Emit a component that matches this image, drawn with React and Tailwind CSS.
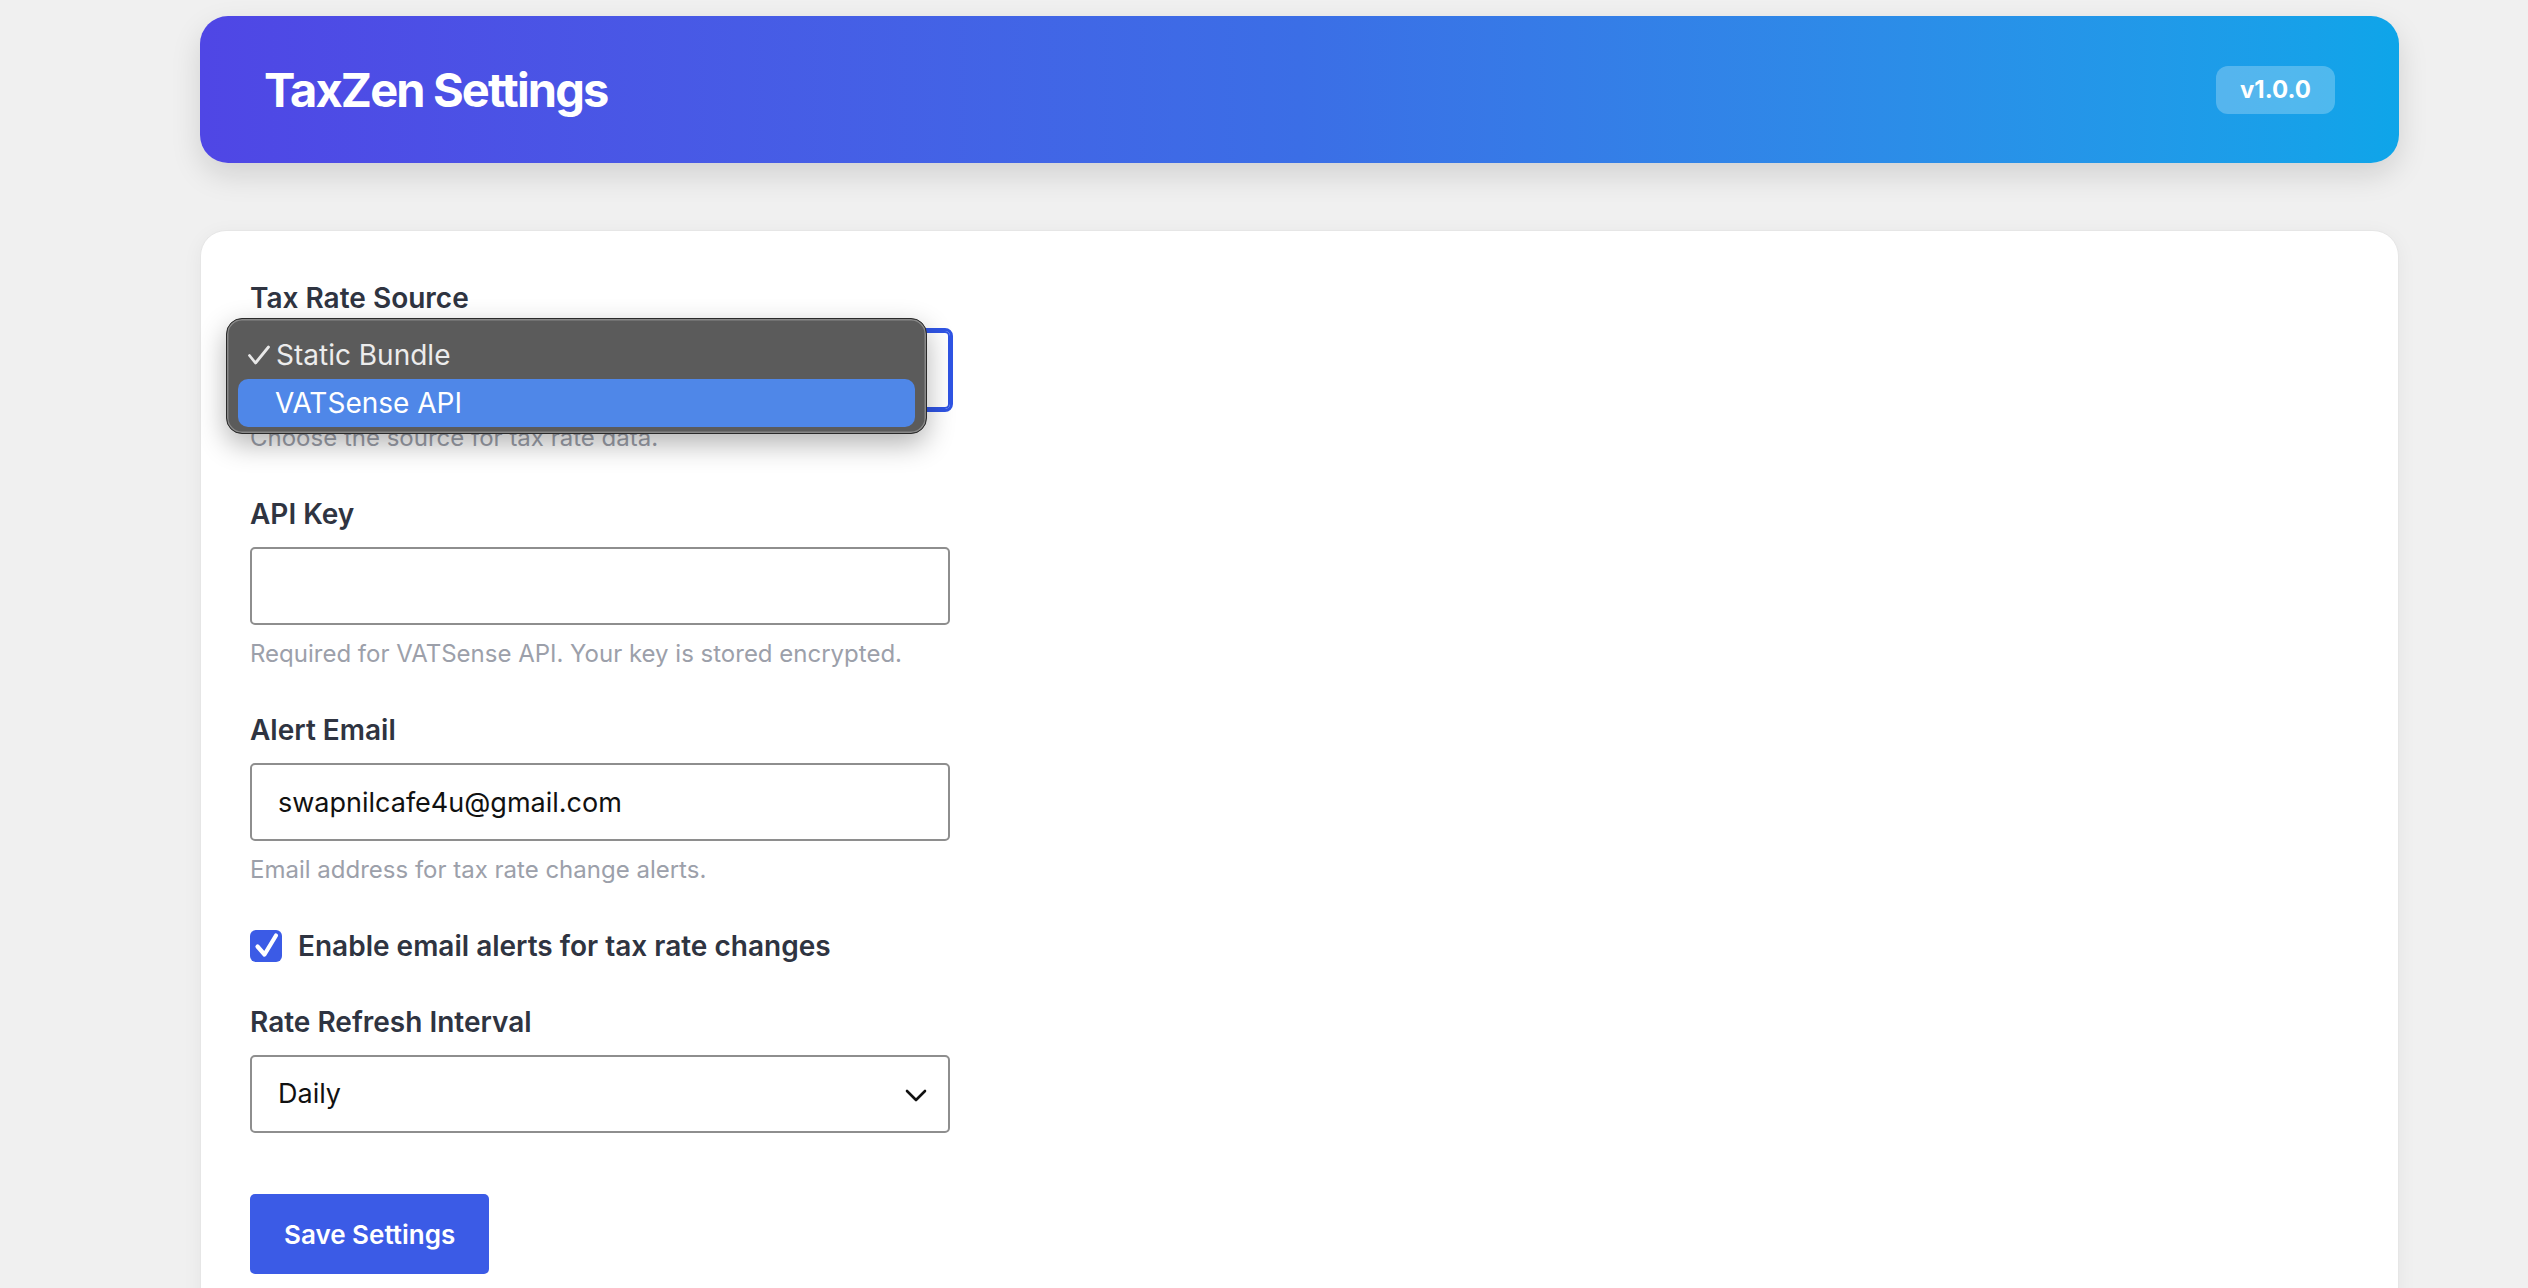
import React, { useState } from 'react';

const font = { fontFamily: 'Inter, "Noto Sans", sans-serif' };

function Chevron() {
  return (
    <svg width="22" height="13" viewBox="0 0 22 13" fill="none">
      <path d="M2 2l9 9 9-9" stroke="#111" strokeWidth="2.6" strokeLinecap="round" strokeLinejoin="round" />
    </svg>
  );
}

function Field({ label, help, children }) {
  return (
    <div className="mb-[42px]">
      <label className="block text-[28px] leading-[36px] font-semibold text-[#2f3441] mb-[15px]">{label}</label>
      {children}
      {help && <p className="mt-[13px] text-[24px] leading-[32px] text-[#9ca0aa]">{help}</p>}
    </div>
  );
}

export default function App() {
  const [apiKey, setApiKey] = useState('');
  const [email, setEmail] = useState('swapnilcafe4u@gmail.com');
  const [alerts, setAlerts] = useState(true);
  const [interval, setInterval] = useState('daily');

  return (
    <div className="min-h-screen bg-[#f0f0f0] pt-[16px] pb-[40px]" style={font}>
      <div className="ml-[200px] w-[2199px]">
        {/* header */}
        <div className="h-[147px] rounded-[28px] bg-gradient-to-r from-[#4f46e5] via-[#3b6ee6] to-[#0ea5e9] px-16 flex items-center justify-between shadow-[0_12px_30px_rgba(0,0,0,0.13)]">
          <h1 className="text-[47px] leading-none font-bold tracking-[-0.04em] text-white">TaxZen Settings</h1>
          <span className="rounded-[12px] bg-white/25 px-[24px] h-[48px] flex items-center text-[24px] font-bold text-white">v1.0.0</span>
        </div>

        {/* settings card */}
        <div className="mt-[67px] rounded-[26px] bg-white border border-[#e6e6e6] shadow-[0_4px_20px_rgba(0,0,0,0.05)] pt-[49px] pb-[50px] px-[49px]">
          <Field label="Tax Rate Source" help="Choose the source for tax rate data.">
            <div className="relative w-[700px]">
              <select className="w-[700px] h-[78px] appearance-none rounded-[5px] border-2 border-[#2f54e4] outline-[3px] outline-[#2f54e4] pl-[26px] text-[27px] text-[#111] bg-white" defaultValue="static">
                <option value="static">Static Bundle</option>
                <option value="vatsense">VATSense API</option>
              </select>
              {/* open popup menu */}
              <div className="absolute left-[-24px] top-[-13px] z-10 w-[701px] h-[116px] rounded-[16px] bg-[#5b5b5b] border border-[#2a2a2a] shadow-[inset_0_0_0_1.5px_rgba(255,255,255,0.28),0_10px_28px_rgba(0,0,0,0.3)] pt-[12px] px-[11px]">
                <div className="h-[48px] flex items-center text-[28px] text-[#ececec] pl-[9px]">
                  <span className="w-[29px] flex items-center">
                    <svg width="24" height="20" viewBox="0 0 24 20" fill="none">
                      <path d="M2.5 10.5l6 7.5L21.5 2" stroke="#e8e8e8" strokeWidth="2.8" strokeLinecap="round" strokeLinejoin="round" />
                    </svg>
                  </span>
                  <span>Static Bundle</span>
                </div>
                <div className="h-[48px] flex items-center rounded-[10px] bg-[#4f87e8] text-[28px] text-white pl-[37px]">
                  VATSense API
                </div>
              </div>
            </div>
          </Field>

          <Field label="API Key" help="Required for VATSense API. Your key is stored encrypted.">
            <input
              type="text"
              value={apiKey}
              onChange={(e) => setApiKey(e.target.value)}
              className="w-[700px] h-[78px] rounded-[5px] border-2 border-[#8e8e8e] px-[26px] text-[27px] text-[#111] outline-none"
            />
          </Field>

          <Field label="Alert Email" help="Email address for tax rate change alerts.">
            <input
              type="email"
              value={email}
              onChange={(e) => setEmail(e.target.value)}
              className="w-[700px] h-[78px] rounded-[5px] border-2 border-[#8e8e8e] px-[26px] text-[27px] text-[#111] outline-none"
            />
          </Field>

          <label className="mb-[40px] flex items-center h-[36px] cursor-pointer" onClick={() => setAlerts(!alerts)}>
            <span className={`w-[32px] h-[32px] rounded-[6px] flex items-center justify-center ${alerts ? 'bg-[#3b5be6]' : 'border-2 border-[#8e8e8e] bg-white'}`}>
              {alerts && (
                <svg width="32" height="32" viewBox="0 0 32 32" fill="none">
                  <path d="M7.5 16.5l7 8L26 5.5" stroke="#fff" strokeWidth="4.2" strokeLinecap="round" strokeLinejoin="round" />
                </svg>
              )}
            </span>
            <span className="ml-[16px] text-[28px] leading-[36px] font-semibold text-[#2f3441]">Enable email alerts for tax rate changes</span>
          </label>

          <Field label="Rate Refresh Interval">
            <div className="relative w-[700px]">
              <select
                value={interval}
                onChange={(e) => setInterval(e.target.value)}
                className="w-[700px] h-[78px] appearance-none rounded-[5px] border-2 border-[#8e8e8e] pl-[26px] text-[27px] text-[#111] bg-white outline-none"
              >
                <option value="hourly">Hourly</option>
                <option value="daily">Daily</option>
                <option value="weekly">Weekly</option>
              </select>
              <span className="pointer-events-none absolute right-[23px] top-[34px]">
                <Chevron />
              </span>
            </div>
          </Field>

          <button className="mt-[19px] h-[80px] px-[34px] rounded-[5px] bg-[#3b5be6] text-[26px] font-semibold text-white">
            Save Settings
          </button>
        </div>
      </div>
    </div>
  );
}
